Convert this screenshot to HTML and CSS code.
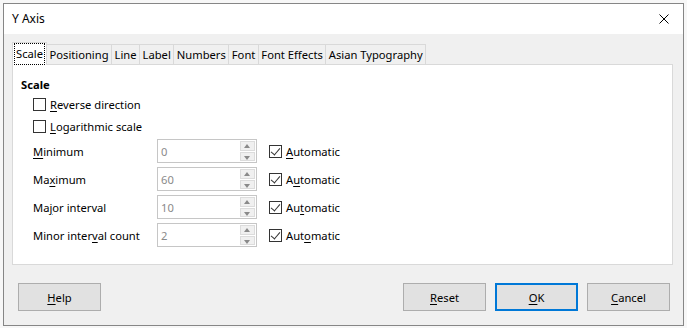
FILE: index.html
```html
<!DOCTYPE html>
<html lang="en">
<head>
    <meta charset="UTF-8">
    <title>Y Axis</title>
    <link rel="stylesheet" href="styles.css">
</head>
<body>
    <div class="dialog">
        <div class="titlebar">
            <span class="title">Y Axis</span>
            <svg class="close" width="10" height="10" viewBox="0 0 10 10">
                <path d="M0.5 0.5 L9.5 9.5 M9.5 0.5 L0.5 9.5" stroke="#000" stroke-width="1" fill="none"/>
            </svg>
        </div>

        <div class="dialog-body">
            <div class="tabs">
                <div class="tab tab-active"><span class="focus">Scale</span></div>
                <div class="tab">Positioning</div>
                <div class="tab">Line</div>
                <div class="tab">Label</div>
                <div class="tab">Numbers</div>
                <div class="tab">Font</div>
                <div class="tab">Font Effects</div>
                <div class="tab">Asian Typography</div>
            </div>

            <div class="panel">
                <div class="section-title">Scale</div>

                <div class="check-row">
                    <span class="checkbox"></span>
                    <span><u>R</u>everse direction</span>
                </div>
                <div class="check-row">
                    <span class="checkbox"></span>
                    <span><u>L</u>ogarithmic scale</span>
                </div>

                <div class="field-row">
                    <span class="field-label"><u>M</u>inimum</span>
                    <div class="spin">
                        <span class="spin-value">0</span>
                        <div class="spin-buttons">
                            <span class="spin-up"></span>
                            <span class="spin-down"></span>
                        </div>
                    </div>
                    <div class="auto">
                        <span class="checkbox checked"></span>
                        <span><u>A</u>utomatic</span>
                    </div>
                </div>

                <div class="field-row">
                    <span class="field-label">Ma<u>x</u>imum</span>
                    <div class="spin">
                        <span class="spin-value">60</span>
                        <div class="spin-buttons">
                            <span class="spin-up"></span>
                            <span class="spin-down"></span>
                        </div>
                    </div>
                    <div class="auto">
                        <span class="checkbox checked"></span>
                        <span>A<u>u</u>tomatic</span>
                    </div>
                </div>

                <div class="field-row">
                    <span class="field-label">Ma<u>j</u>or interval</span>
                    <div class="spin">
                        <span class="spin-value">10</span>
                        <div class="spin-buttons">
                            <span class="spin-up"></span>
                            <span class="spin-down"></span>
                        </div>
                    </div>
                    <div class="auto">
                        <span class="checkbox checked"></span>
                        <span>Au<u>t</u>omatic</span>
                    </div>
                </div>

                <div class="field-row">
                    <span class="field-label">Minor inter<u>v</u>al count</span>
                    <div class="spin">
                        <span class="spin-value">2</span>
                        <div class="spin-buttons">
                            <span class="spin-up"></span>
                            <span class="spin-down"></span>
                        </div>
                    </div>
                    <div class="auto">
                        <span class="checkbox checked"></span>
                        <span>Aut<u>o</u>matic</span>
                    </div>
                </div>
            </div>

            <div class="buttons">
                <button class="button"><u>H</u>elp</button>
                <div class="spacer"></div>
                <button class="button"><u>R</u>eset</button>
                <button class="button button-default"><u>O</u>K</button>
                <button class="button"><u>C</u>ancel</button>
            </div>
        </div>
    </div>
</body>
</html>
```

FILE: styles.css
```css
/* Base */
* {
    margin: 0;
    padding: 0;
    box-sizing: border-box;
}

:root {
    --face: #f0f0f0;
    --line: #d9d9d9;
    --text: #000;
    --muted: #8a8a8a;
    --accent: #0078d7;
}

html {
    background: #f7f7f7;
}

body {
    font-family: "Noto Sans", "Open Sans", sans-serif;
    font-size: 11.2px;
    color: var(--text);
    padding: 3px;
}

u {
    text-underline-offset: 2px;
}

/* Window frame */
.dialog {
    width: 681px;
    height: 323px;
    border: 1px solid #868686;
    background: var(--face);
    display: flex;
    flex-direction: column;
}

.titlebar {
    height: 30px;
    background: #fff;
    display: flex;
    align-items: center;
    justify-content: space-between;
    padding: 0 14px 1px 8px;
    font-size: 12px;
}

.close {
    display: block;
}

.dialog-body {
    flex: 1;
    padding: 8px 10px 0 8px;
    display: flex;
    flex-direction: column;
}

/* Tabs */
.tabs {
    display: flex;
    align-items: flex-end;
    height: 22px;
    position: relative;
    z-index: 1;
}

.tab {
    height: 20px;
    padding: 0 2.5px;
    border: 1px solid var(--line);
    border-bottom: none;
    border-left: none;
    background: var(--face);
    line-height: 19px;
    white-space: nowrap;
}

.tab:first-child {
    border-left: 1px solid var(--line);
}

.tab-active {
    height: 23px;
    margin-bottom: -1px;
    padding: 1px 2px 0;
    background: #fff;
    border-left: 1px solid var(--line);
    border-right: 1px solid var(--line);
}

.focus {
    display: block;
    height: 20px;
    padding: 0 1px;
    outline: 1px dotted #000;
    line-height: 19px;
}

/* Tab page */
.panel {
    height: 201px;
    background: #fff;
    border: 1px solid var(--line);
    padding: 12px 8px 0;
}

.section-title {
    font-weight: bold;
    height: 16px;
    line-height: 16px;
}

.check-row {
    height: 22px;
    display: flex;
    align-items: center;
    gap: 4px;
    padding-left: 12px;
}

.checkbox {
    width: 13px;
    height: 13px;
    border: 1px solid #333;
    background: #fff;
    flex: none;
    position: relative;
}

.checkbox.checked::after {
    content: '';
    position: absolute;
    left: 3px;
    top: 0px;
    width: 4px;
    height: 8px;
    border-right: 1px solid #333;
    border-bottom: 1px solid #333;
    transform: rotate(40deg);
}

.field-row {
    height: 28px;
    display: flex;
    align-items: center;
    padding-left: 12px;
}

.field-label {
    width: 124px;
}

.spin {
    width: 100px;
    height: 24px;
    border: 1px solid #c6c6c6;
    background: #fff;
    display: flex;
    align-items: center;
    justify-content: space-between;
    padding: 0 1px 0 3px;
}

.spin-value {
    color: var(--muted);
}

.spin-buttons {
    width: 15px;
    height: 20px;
    display: flex;
    flex-direction: column;
    gap: 1px;
}

.spin-up,
.spin-down {
    flex: 1;
    background: #f0f0f0;
    border: 1px solid #dcdcdc;
    position: relative;
}

.spin-up::after,
.spin-down::after {
    content: '';
    position: absolute;
    left: 3px;
    width: 0;
    height: 0;
    border-left: 3.5px solid transparent;
    border-right: 3.5px solid transparent;
}

.spin-up::after {
    top: 2px;
    border-bottom: 4px solid #8a8a8a;
}

.spin-down::after {
    top: 3px;
    border-top: 4px solid #8a8a8a;
}

.auto {
    display: flex;
    align-items: center;
    gap: 4px;
    margin-left: 12px;
}

/* Button row */
.buttons {
    display: flex;
    gap: 9px;
    padding: 18px 3px 0 6px;
}

.spacer {
    flex: 1;
}

.button {
    width: 83px;
    height: 28px;
    font: inherit;
    color: var(--text);
    background: #e1e1e1;
    border: 1px solid #adadad;
}

.button-default {
    border: 2px solid var(--accent);
}
```
